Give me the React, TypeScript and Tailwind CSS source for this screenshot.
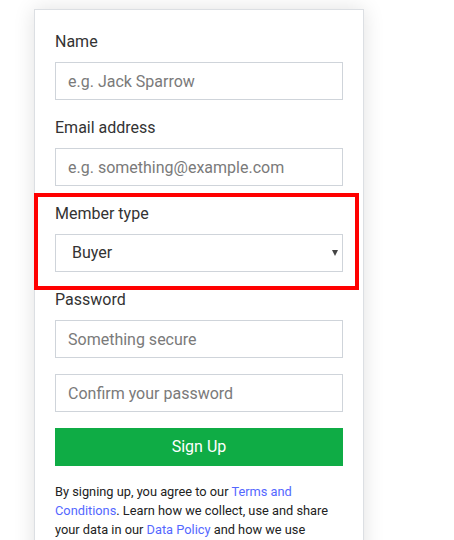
import React from 'react';

const Field = ({ label, children }: { label: string; children: React.ReactNode }) => (
  <div className="flex flex-col">
    <label className="text-[16px] leading-6 text-[#333] mb-2">{label}</label>
    {children}
  </div>
);

const inputCls =
  'h-[38px] w-full border border-[#cfd4da] px-3 text-[16px] text-[#333] placeholder:text-[#7a7a7a] outline-none bg-white';

export default function App() {
  return (
    <div className="min-h-[540px] w-[454px] bg-white font-['Roboto',sans-serif] relative overflow-hidden">
      <div className="ml-[34px] mt-[9px] w-[330px] border border-[#dcdfe3] bg-white shadow-[0_0_20px_rgba(0,0,0,0.12)] px-5 pt-5 pb-6">
        <div className="flex flex-col gap-4">
          <Field label="Name">
            <input className={inputCls} placeholder="e.g. Jack Sparrow" />
          </Field>
          <Field label="Email address">
            <input className={inputCls} placeholder="e.g. something@example.com" />
          </Field>
          <Field label="Member type">
            <div className="relative h-[38px] border border-[#cfd4da] flex items-center pl-4 text-[16px] text-[#333]">
              Buyer
              <span className="absolute right-[4px] top-1/2 -translate-y-1/2 w-0 h-0 border-l-[3.5px] border-r-[3.5px] border-t-[6px] border-l-transparent border-r-transparent border-t-[#444]" />
            </div>
          </Field>
          <Field label="Password">
            <input className={inputCls} placeholder="Something secure" />
            <input className={inputCls + ' mt-4'} placeholder="Confirm your password" />
          </Field>
        </div>
        <button className="mt-4 h-[38px] w-full bg-[#0fac45] text-white text-[16px]">Sign Up</button>
        <p className="mt-4 text-[12.8px] leading-[19px] text-[#222]">
          By signing up, you agree to our <span className="text-[#5468ff]">Terms and Conditions</span>. Learn how we
          collect, use and share your data in our <span className="text-[#5468ff]">Data Policy</span> and how we use
          cookies and similar technology in our <span className="text-[#5468ff]">Cookie Policy</span>.
        </p>
      </div>
      <div className="absolute left-[34px] top-[193px] w-[325px] h-[97px] border-4 border-[#ff0000] pointer-events-none" />
    </div>
  );
}
